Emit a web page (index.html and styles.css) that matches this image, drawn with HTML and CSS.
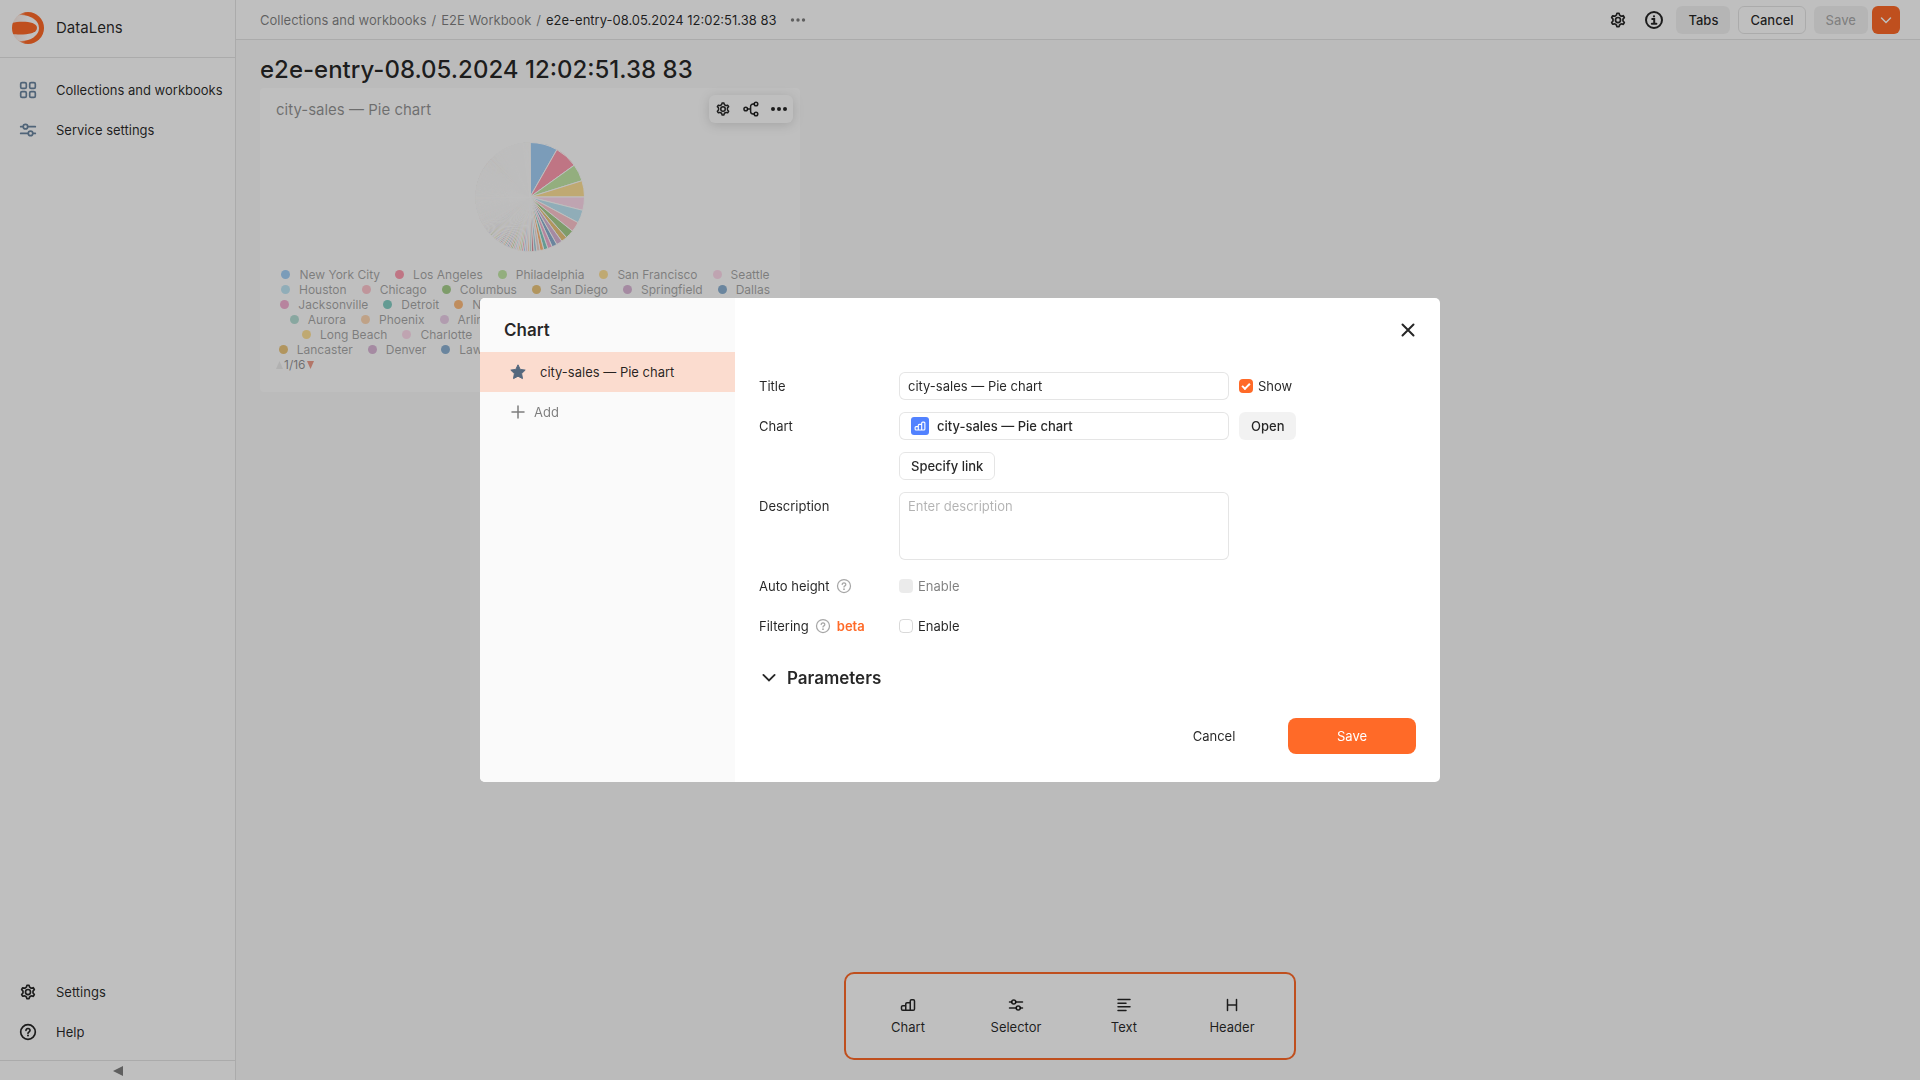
FILE: index.html
```html
<!DOCTYPE html>
<html lang="en">
<head>
<meta charset="utf-8">
<meta name="viewport" content="width=device-width, initial-scale=1">
<title>e2e-entry-08.05.2024 12:02:51.38 83 - DataLens</title>
<link rel="stylesheet" href="styles.css">
</head>
<body>
<svg class="sprite" aria-hidden="true">
  <symbol id="gear" viewBox="0 0 16 16"><path d="M7.199 2H8.8a.2.2 0 0 1 .2.2c0 1.808 1.958 2.939 3.524 2.034a.199.199 0 0 1 .271.073l.802 1.388a.199.199 0 0 1-.073.272c-1.566.904-1.566 3.164 0 4.069a.199.199 0 0 1 .073.271l-.802 1.388a.199.199 0 0 1-.271.073C10.958 10.863 9 11.993 9 13.8a.2.2 0 0 1-.199.2H7.2a.199.199 0 0 1-.2-.2c0-1.808-1.958-2.938-3.524-2.034a.199.199 0 0 1-.272-.073l-.8-1.388a.199.199 0 0 1 .072-.271c1.566-.905 1.566-3.165 0-4.07a.199.199 0 0 1-.073-.271l.801-1.388a.199.199 0 0 1 .272-.073C5.042 5.138 7 4.007 7 2.2c0-.11.089-.2.199-.2Z"/><circle cx="8" cy="8" r="2.250"/></symbol>
  <symbol id="sliders" viewBox="0 0 16 16"><path d="M1.5 5h2.25M7.75 5h6.75M1.5 11h6.75M12.25 11h2.25"/><circle cx="5.75" cy="5" r="2"/><circle cx="10.25" cy="11" r="2"/></symbol>
  <symbol id="bars" viewBox="0 0 16 16"><path d="M5.75 13.25h-3a1.25 1.25 0 0 1-1.25-1.25v-2a1.25 1.25 0 0 1 1.25-1.25h3zM5.75 13.25V7A1.25 1.25 0 0 1 7 5.75h3.25v7.5zM10.25 13.25V4a1.25 1.25 0 0 1 1.25-1.25h1.75A1.25 1.25 0 0 1 14.500 4v8a1.250 1.250 0 0 1-1.250 1.250z"/></symbol>
  <symbol id="help" viewBox="0 0 16 16"><circle cx="8" cy="8" r="6.5"/><path d="M6.2 6.500a1.800 1.600 0 1 1 2.700 1.400c-.6.3-.9.600-.9 1.200"/><circle class="dot" cx="8" cy="11.200" r=".9"/></symbol>
</svg>

<div class="app">
  <aside class="sidebar">
    <a class="brand" href="#">
      <svg class="logo" viewBox="0 0 32 32" aria-hidden="true">
        <defs>
          <linearGradient id="ring"><stop offset=".1" stop-color="#ff6a28" stop-opacity=".05"/><stop offset=".42" stop-color="#ff6a28"/></linearGradient>
          <linearGradient id="lens"><stop offset="0" stop-color="#f6d9cd"/><stop offset=".7" stop-color="#fff"/></linearGradient>
          <clipPath id="disc"><circle cx="16" cy="16" r="16"/></clipPath>
        </defs>
        <g clip-path="url(#disc)">
          <rect width="32" height="32" fill="url(#ring)"/>
          <ellipse cx="9" cy="16" rx="18" ry="13" fill="url(#lens)"/>
          <path d="M0 11C8 9 25 9 25 16S8 23 0 22z" fill="#ff6a28"/>
        </g>
      </svg>
      <span>DataLens</span>
    </a>
    <nav class="nav nav-main">
      <a class="nav-item" href="#"><svg class="icon icon-misc" viewBox="0 0 16 16"><rect x="1.500" y="1.500" width="5" height="5" rx="1.200"/><rect x="9.500" y="1.500" width="5" height="5" rx="1.200"/><rect x="1.500" y="9.500" width="5" height="5" rx="1.200"/><rect x="9.500" y="9.500" width="5" height="5" rx="1.200"/></svg>Collections and workbooks</a>
      <a class="nav-item" href="#"><svg class="icon icon-misc"><use href="#sliders"/></svg>Service settings</a>
    </nav>
    <nav class="nav">
      <a class="nav-item" href="#"><svg class="icon"><use href="#gear"/></svg>Settings</a>
      <a class="nav-item" href="#"><svg class="icon"><use href="#help"/></svg>Help</a>
    </nav>
    <button class="collapse" type="button" aria-label="Collapse"><svg width="10" height="10" viewBox="0 0 10 10"><path d="M0 5 10 0v10z"/></svg></button>
  </aside>

  <div class="workspace">
    <header class="topbar">
      <nav class="crumbs"><a href="#">Collections and workbooks</a><span>/</span><a href="#">E2E Workbook</a><span>/</span><a class="current" href="#">e2e-entry-08.05.2024 12:02:51.38 83</a></nav>
      <button class="more" type="button" aria-label="More"><svg class="icon16 filled" viewBox="0 0 16 16"><circle cx="2.500" cy="8" r="1.700"/><circle cx="8" cy="8" r="1.700"/><circle cx="13.500" cy="8" r="1.700"/></svg></button>
      <div class="actions">
        <button class="icon-btn" type="button" aria-label="Settings"><svg class="icon"><use href="#gear"/></svg></button>
        <button class="icon-btn" type="button" aria-label="Information"><svg class="icon icon-info" viewBox="0 0 18 18"><circle cx="9" cy="9" r="8"/><path d="M7.200 8h2v4.500M6.800 12.700h4.600"/><circle class="dot" cx="9" cy="5.300" r="1.100"/></svg></button>
        <button class="btn btn-normal" type="button">Tabs</button>
        <button class="btn btn-outlined" type="button">Cancel</button>
        <span class="split">
          <button class="btn btn-normal" type="button" disabled>Save</button>
          <button class="btn btn-accent btn-square" type="button" aria-label="Save options"><svg class="icon16" viewBox="0 0 16 16"><path d="m3.500 6 4.500 4.500L12.500 6"/></svg></button>
        </span>
      </div>
    </header>

    <main class="board">
      <h1>e2e-entry-08.05.2024 12:02:51.38 83</h1>
      <section class="widget">
        <div class="widget-body">
          <h2>city-sales — Pie chart</h2>
          <svg class="pie" id="pie" viewBox="-55 -55 110 110" role="img" aria-label="Pie chart of sales by city"></svg>
          <div class="legend" id="legend"></div>
          <div class="pager"><svg viewBox="0 0 7 8"><path class="off" d="M0 8 3.500 0 7 8z"/></svg>1/16<svg viewBox="0 0 7 8"><path class="on" d="M0 0h7L3.500 8z"/></svg></div>
        </div>
        <div class="widget-tools">
          <button type="button" aria-label="Configure"><svg class="icon16"><use href="#gear"/></svg></button>
          <button type="button" aria-label="Links"><svg class="icon16" viewBox="0 0 16 16"><circle cx="2.750" cy="8" r="1.800"/><circle cx="13" cy="3" r="1.800"/><circle cx="13" cy="13" r="1.800"/><path d="M4.600 8h3M11.200 3H10a2.400 2.400 0 0 0-2.400 2.400v5.200A2.400 2.400 0 0 0 10 13h1.200"/></svg></button>
          <button type="button" aria-label="More"><svg class="icon16 filled" viewBox="0 0 16 16"><circle cx="2" cy="8" r="2"/><circle cx="8" cy="8" r="2"/><circle cx="14" cy="8" r="2"/></svg></button>
        </div>
      </section>
      <div class="dock">
        <button type="button"><svg class="icon16"><use href="#bars"/></svg>Chart</button>
        <button type="button"><svg class="icon16"><use href="#sliders"/></svg>Selector</button>
        <button type="button"><svg class="icon16" viewBox="0 0 16 16"><path d="M2 2.500h12M2 6.200h8M2 9.800h12M2 13.500h8"/></svg>Text</button>
        <button type="button"><svg class="icon16" viewBox="0 0 16 16"><path d="M3.500 2.500v11M12.500 2.500v11M3.500 8h9"/></svg>Header</button>
      </div>
    </main>
  </div>
</div>

<div class="veil">
  <div class="dialog" role="dialog" aria-modal="true" aria-labelledby="dialog-title">
    <div class="tabs">
      <h2 id="dialog-title">Chart</h2>
      <button class="tab tab-active" type="button"><svg class="star" viewBox="0 0 16 16"><path d="m8 .8 2.200 4.600 5 .7-3.600 3.500.9 5L8 12.200l-4.500 2.400.9-5L.8 6.100l5-.7z"/></svg>city-sales — Pie chart</button>
      <button class="tab tab-add" type="button"><svg class="icon16" viewBox="0 0 16 16"><path d="M8 2v12M2 8h12"/></svg>Add</button>
    </div>
    <form class="form">
      <div class="form-head"><button class="close" type="button" aria-label="Close"><svg class="icon16" viewBox="0 0 16 16"><path d="m2.500 2.500 11 11M13.500 2.500l-11 11"/></svg></button></div>
      <div class="fields">
        <label class="name" for="title">Title</label>
        <div class="control"><input class="text" id="title" type="text" value="city-sales — Pie chart"><label class="check"><input type="checkbox" checked>Show</label></div>
        <span class="name" id="chart-name">Chart</span>
        <div class="control"><button class="picker" type="button" aria-describedby="chart-name"><span class="badge"><svg viewBox="0 0 16 16"><use href="#bars"/></svg></span>city-sales — Pie chart</button><button class="btn btn-normal" type="button">Open</button></div>
        <div class="control second"><button class="btn btn-outlined" type="button">Specify link</button></div>
        <label class="name" for="description">Description</label>
        <div class="control"><textarea class="text" id="description" placeholder="Enter description"></textarea></div>
        <span class="name">Auto height<svg class="hint"><use href="#help"/></svg></span>
        <div class="control"><label class="check"><input type="checkbox" disabled>Enable</label></div>
        <span class="name">Filtering<svg class="hint"><use href="#help"/></svg><b>beta</b></span>
        <div class="control"><label class="check"><input type="checkbox">Enable</label></div>
      </div>
      <button class="params" type="button"><svg viewBox="0 0 16 16"><path d="M3.500 5.500 8 10l4.500-4.500"/></svg>Parameters</button>
      <div class="form-foot"><button class="big" type="button">Cancel</button><button class="big big-accent" type="submit">Save</button></div>
    </form>
  </div>
</div>
<script src="chart.js"></script>
</body>
</html>
```
FILE: styles.css
```css
:root {
  --accent: #ff6a28;
  --text: rgba(0, 0, 0, .85);
  --secondary: rgba(0, 0, 0, .5);
  --line: rgba(0, 0, 0, .1);
  --fill: rgba(0, 0, 0, .05);
}

*, ::before { box-sizing: border-box; }

body {
  margin: 0;
  color: var(--text);
  font: 13px/18px Inter, sans-serif;
}

h1, h2 { margin: 0; }
a { color: inherit; text-decoration: none; }

button {
  padding: 0;
  border: 0;
  background: none;
  color: inherit;
  font: inherit;
}

svg { flex: none; }

.sprite { display: none; }

.icon, .icon16, .hint, .badge svg, .params svg {
  width: 16px;
  height: 16px;
  fill: none;
  stroke: currentColor;
  stroke-width: 1.5;
  stroke-linecap: round;
}

.icon { width: 18px; height: 18px; }
.icon-info { stroke-width: 2; }
.icon-misc { color: #6b86a1; }
.filled, .dot { fill: currentColor; stroke: none; }

/* Frame */

.app {
  display: grid;
  grid-template-columns: 236px 1fr;
  min-height: 100vh;
  background: #fff;
}

.sidebar {
  display: flex;
  flex-direction: column;
  border-right: 1px solid var(--line);
}

.brand {
  display: flex;
  align-items: center;
  gap: 12px;
  height: 58px;
  padding: 0 12px 2px;
  border-bottom: 1px solid var(--line);
  font-size: 15px;
}

.logo { width: 32px; height: 32px; }

.nav-main { flex: 1; padding-top: 12px; }

.nav-item {
  display: flex;
  align-items: center;
  gap: 19px;
  height: 40px;
  padding-left: 19px;
}

.collapse {
  display: flex;
  align-items: center;
  justify-content: center;
  height: 20px;
  margin-top: 8px;
  border-top: 1px solid var(--line);
  fill: var(--secondary);
}

.workspace {
  display: flex;
  flex-direction: column;
  min-width: 0;
}

.topbar {
  display: flex;
  align-items: center;
  height: 40px;
  padding: 0 20px 0 24px;
  border-bottom: 1px solid var(--line);
}

.crumbs { display: flex; gap: 5px; color: var(--secondary); }
.crumbs .current { color: var(--text); }

.more { display: flex; margin-left: 14px; color: var(--secondary); }

.actions { display: flex; align-items: center; gap: 8px; margin-left: auto; }
.split { display: flex; gap: 4px; }

.icon-btn {
  display: flex;
  align-items: center;
  justify-content: center;
  width: 28px;
  height: 28px;
}

.btn {
  height: 28px;
  padding: 0 12px;
  border-radius: 6px;
  font-weight: 500;
}

.btn-normal { background: var(--fill); }
.btn-normal:disabled { color: rgba(0, 0, 0, .3); }
.btn-outlined { padding: 0 11px; border: 1px solid var(--line); }
.btn-accent { background: var(--accent); color: #fff; }
.btn-square { display: flex; align-items: center; justify-content: center; width: 28px; padding: 0; }

/* Dashboard */

.board {
  display: flex;
  flex: 1;
  flex-direction: column;
  padding: 14px 40px 20px 24px;
  background: #fafafa;
}

.board h1 {
  margin-bottom: 2px;
  font-size: 24px;
  font-weight: 500;
  line-height: 32px;
}

.widget {
  position: relative;
  width: 540px;
  height: 304px;
  border-radius: 4px;
  background: #fff;
}

.widget-body {
  display: flex;
  flex-direction: column;
  padding: 12px 16px 0;
  opacity: .5;
}

.widget-body h2 { font-size: 15px; font-weight: 400; line-height: 20px; }

.pie {
  align-self: center;
  width: 110px;
  height: 110px;
  margin-top: 22px;
}

.pie path { stroke: #fff; stroke-width: 1; }

.legend {
  margin-top: 15px;
  color: rgba(0, 0, 0, .7);
  font-size: 12px;
  line-height: 15px;
}

.legend ul {
  display: flex;
  gap: 15px;
  justify-content: center;
  margin: 0;
  padding: 0 9px 0 0;
  list-style: none;
  white-space: nowrap;
}

.legend li { display: flex; align-items: center; gap: 9px; }
.legend i { width: 9px; height: 9px; border-radius: 50%; }

.pager {
  display: flex;
  align-items: center;
  gap: 1px;
  font-size: 12px;
  line-height: 15px;
}

.pager svg { width: 7px; height: 8px; }
.pager .off { fill: #ddd; }
.pager .on { fill: #e0401a; }

.widget-tools {
  position: absolute;
  top: 7px;
  right: 7px;
  display: flex;
  border-radius: 6px;
  background: #fff;
  box-shadow: 0 2px 12px rgba(0, 0, 0, .15);
}

.widget-tools button {
  display: flex;
  align-items: center;
  justify-content: center;
  width: 28px;
  height: 28px;
}

.dock {
  display: flex;
  align-self: center;
  justify-content: center;
  width: 452px;
  height: 88px;
  margin-top: auto;
  border: 2px solid var(--accent);
  border-radius: 10px;
  background: #fff;
}

.dock button {
  display: flex;
  flex-direction: column;
  align-items: center;
  justify-content: center;
  gap: 5px;
  width: 108px;
}

/* Dialog */

.veil {
  position: fixed;
  inset: 0;
  display: flex;
  align-items: center;
  justify-content: center;
  background: rgba(0, 0, 0, .25);
}

.dialog {
  display: grid;
  grid-template-columns: 255px 1fr;
  width: 960px;
  overflow: hidden;
  border-radius: 5px;
  background: #fff;
}

.tabs { background: #fafafa; }

.tabs h2 {
  padding: 20px 24px 10px;
  font-size: 17px;
  font-weight: 600;
  line-height: 24px;
}

.tab {
  display: flex;
  align-items: center;
  gap: 14px;
  width: 100%;
  height: 40px;
  padding-left: 30px;
}

.tab-active { background: #fbdccf; }
.tab-add { gap: 8px; color: var(--secondary); }
.star { width: 16px; height: 16px; fill: #54687e; stroke: #54687e; stroke-linejoin: round; }

.form {
  display: flex;
  flex-direction: column;
  padding: 24px 24px 28px;
}

.form-head { display: flex; justify-content: flex-end; height: 50px; }
.close { display: flex; align-self: flex-start; }
.close svg { stroke-width: 2; }

.fields {
  display: grid;
  grid-template-columns: 128px 1fr;
  gap: 12px;
}

.name {
  display: flex;
  align-items: center;
  align-self: start;
  gap: 6px;
  height: 28px;
}

.name b { color: var(--accent); font-weight: 600; }
.hint { width: 16px; height: 16px; color: rgba(0, 0, 0, .35); stroke-width: 1.25; }

.control { display: flex; gap: 10px; min-height: 28px; }
.second { grid-column: 2; }

.text, .picker {
  width: 330px;
  height: 28px;
  padding: 0 8px;
  border: 1px solid var(--line);
  border-radius: 6px;
  background: #fff;
  color: inherit;
  font: inherit;
}

textarea.text { height: 68px; padding: 4px 8px; resize: none; }
.text::placeholder { color: rgba(0, 0, 0, .3); }

.picker {
  display: flex;
  align-items: center;
  gap: 8px;
  padding: 0 11px;
  font-weight: 500;
}

.badge {
  display: flex;
  align-items: center;
  justify-content: center;
  width: 18px;
  height: 18px;
  border-radius: 3px;
  background: #5282ff;
  color: #fff;
}

.badge svg { width: 12px; height: 12px; }

.check { display: flex; align-items: center; gap: 5px; height: 28px; }

.check input {
  display: flex;
  justify-content: center;
  width: 14px;
  height: 14px;
  margin: 0;
  border: 1px solid rgba(0, 0, 0, .15);
  border-radius: 4px;
  appearance: none;
}

.check input:checked { border: 0; background: var(--accent); }

.check input:checked::before {
  width: 8px;
  height: 5px;
  margin-top: 4px;
  border: solid #fff;
  border-width: 0 0 2px 2px;
  content: "";
  transform: rotate(-45deg);
}

.check input:disabled { border: 0; background: rgba(0, 0, 0, .08); }
.check:has(:disabled) { color: var(--secondary); }

.params {
  display: flex;
  align-items: center;
  gap: 8px;
  margin-top: 26px;
  font-size: 17px;
  font-weight: 600;
  line-height: 24px;
}

.params svg { width: 20px; height: 20px; }

.form-foot {
  display: flex;
  gap: 10px;
  justify-content: flex-end;
  margin-top: 28px;
}

.big { width: 128px; height: 36px; border-radius: 8px; }
.big-accent { background: var(--accent); color: #fff; }
```
FILE: chart.js
```js
const palette = ['#4da2f1', '#ff3d64', '#8ad554', '#ffc636', '#ffb9dd', '#84d1ee', '#ff91a1',
  '#54a520', '#db9100', '#ba74b3', '#1f68a9', '#ed65a9', '#0fa08d', '#ff7e00', '#e8b0a4',
  '#52a6c5', '#be2443', '#70c1af', '#ffb46c', '#dca3d7'];

// Largest shares in degrees; the long tail of small cities shrinks evenly.
const shares = [29.6, 24.7, 18.3, 17.4, 14.2, 13.9, 10.7, 9.2, 6.3, 6.3, 5.4, 4.9, 4.5, 4, 3.4, 3, 2.7];
let total = shares.reduce((a, b) => a + b, 0);
let step = 2.2;
while (total + step < 360) {
  shares.push(step);
  total += step;
  step = Math.max(step * 0.975, 0.2);
}

const point = (deg) => {
  const a = (deg - 90) * Math.PI / 180;
  return (54.5 * Math.cos(a)).toFixed(2) + ' ' + (54.5 * Math.sin(a)).toFixed(2);
};
let from = 0;
document.getElementById('pie').innerHTML = shares.map((share, i) => {
  const d = `M0 0L${point(from)}A54.5 54.5 0 0 1 ${point(from + share)}z`;
  from += share;
  return `<path d="${d}" fill="${palette[i % palette.length]}"/>`;
}).join('');

const rows = [
  ['New York City', 'Los Angeles', 'Philadelphia', 'San Francisco', 'Seattle'],
  ['Houston', 'Chicago', 'Columbus', 'San Diego', 'Springfield', 'Dallas'],
  ['Jacksonville', 'Detroit', 'Newark', 'Jackson', 'Cleveland', 'Memphis'],
  ['Aurora', 'Phoenix', 'Arlington', 'Henderson', 'Rochester', 'Akron'],
  ['Long Beach', 'Charlotte', 'Henderson', 'Lakewood', 'Rochester'],
  ['Lancaster', 'Denver', 'Lawrence', 'Richmond', 'Louisville', 'Concord']
];
const firstColor = [0, 5, 11, 17, 3, 8];
document.getElementById('legend').innerHTML = rows.map((row, r) =>
  '<ul>' + row.map((city, i) =>
    `<li><i style="background:${palette[(firstColor[r] + i) % 20]}"></i>${city}</li>`).join('') + '</ul>'
).join('');
```
